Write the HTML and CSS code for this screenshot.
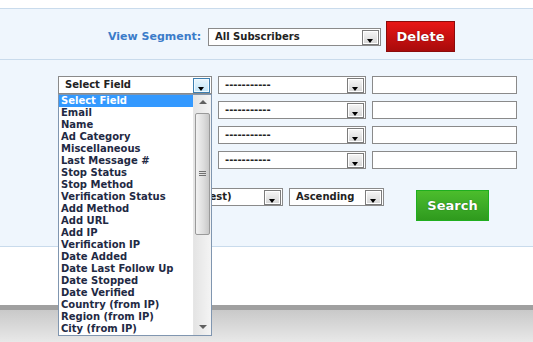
FILE: index.html
```html
<!DOCTYPE html>
<html lang="en">
<head>
  <meta charset="UTF-8" />
  <title>Subscribers</title>
  <link rel="stylesheet" href="styles.css">
</head>
<body>
  <div class="top-space"></div>

  <div class="segment-bar">
    <span class="segment-label">View Segment:</span>
    <div class="select segment-select"><span class="select-text">All Subscribers</span><span class="arrow"></span></div>
    <button class="btn btn-delete">Delete</button>
  </div>

  <div class="filter-panel">
    <div class="filter-rows">
      <div class="filter-row">
        <div class="select field-select"><span class="select-text">Select Field</span><span class="arrow arrow-hot"></span></div>
        <div class="select op-select"><span class="select-text">-----------</span><span class="arrow"></span></div>
        <input class="value-input" type="text">
      </div>
      <div class="filter-row">
        <div class="select field-select"><span class="arrow"></span></div>
        <div class="select op-select"><span class="select-text">-----------</span><span class="arrow"></span></div>
        <input class="value-input" type="text">
      </div>
      <div class="filter-row">
        <div class="select field-select"><span class="arrow"></span></div>
        <div class="select op-select"><span class="select-text">-----------</span><span class="arrow"></span></div>
        <input class="value-input" type="text">
      </div>
      <div class="filter-row">
        <div class="select field-select"><span class="arrow"></span></div>
        <div class="select op-select"><span class="select-text">-----------</span><span class="arrow"></span></div>
        <input class="value-input" type="text">
      </div>
    </div>

    <div class="sort-row">
      <span class="sort-label"></span>
      <div class="select sort-select"><span class="select-text sort-text">Date Added (Newest)</span><span class="arrow"></span></div>
      <div class="select dir-select"><span class="select-text">Ascending</span><span class="arrow"></span></div>
      <button class="btn btn-search">Search</button>
    </div>

    <!-- open dropdown of the first field select -->
    <div class="dropdown">
      <ul class="dropdown-list">
        <li class="selected">Select Field</li>
        <li>Email</li>
        <li>Name</li>
        <li>Ad Category</li>
        <li>Miscellaneous</li>
        <li>Last Message #</li>
        <li>Stop Status</li>
        <li>Stop Method</li>
        <li>Verification Status</li>
        <li>Add Method</li>
        <li>Add URL</li>
        <li>Add IP</li>
        <li>Verification IP</li>
        <li>Date Added</li>
        <li>Date Last Follow Up</li>
        <li>Date Stopped</li>
        <li>Date Verified</li>
        <li>Country (from IP)</li>
        <li>Region (from IP)</li>
        <li>City (from IP)</li>
      </ul>
      <div class="scrollbar">
        <span class="scroll-up"></span>
        <div class="scroll-thumb"><span class="grip"></span></div>
        <span class="scroll-down"></span>
      </div>
    </div>
  </div>

  <div class="white-space"></div>
  <div class="footer-band"></div>
</body>
</html>
```

FILE: styles.css
```css
html, body {
  margin: 0;
  padding: 0;
  height: 100%;
  overflow: hidden;
  background: #fff;
  font-family: 'DejaVu Sans', Verdana, sans-serif;
  font-weight: bold;
  color: #222;
}

.top-space {
  height: 8px;
}

.segment-bar {
  display: flex;
  align-items: flex-start;
  height: 50px;
  padding-left: 108px;
  background: #eff6fd;
  border-top: 1px solid #c9dbec;
  border-bottom: 1px solid #c9dbec;
  box-sizing: content-box;
}

.segment-label {
  margin-top: 21px;
  width: 100px;
  font-size: 11px;
  color: #3b7cc9;
}

/* fake select boxes */
.select {
  display: flex;
  align-items: flex-start;
  justify-content: space-between;
  height: 18px;
  box-sizing: border-box;
  border: 1px solid #8a8a8a;
  background: #fff;
}

.select-text {
  font-size: 10px;
  line-height: 16px;
  padding-left: 6px;
  white-space: nowrap;
  overflow: hidden;
}

.arrow {
  position: relative;
  flex: none;
  width: 17px;
  height: 15px;
  margin: 1px 1px 0 auto;
  box-sizing: border-box;
  border: 1px solid #7c7c7c;
  background: linear-gradient(#f6f6f6, #d6d6d6);
  box-shadow: inset 0 0 0 1px #fff;
}

.arrow::after {
  content: "";
  position: absolute;
  left: 4px;
  top: 8px;
  border-left: 3.5px solid transparent;
  border-right: 3.5px solid transparent;
  border-top: 4px solid #000;
}

.arrow-hot {
  border-color: #3c7fb1;
  background: linear-gradient(#eaf6fd, #bfe4f8);
  box-shadow: inset 0 0 0 1px #f2faff;
}

.segment-select {
  width: 173px;
  margin-top: 19px;
}

.btn {
  border: 1px solid;
  color: #fff;
  font-family: 'DejaVu Sans', Verdana, sans-serif;
  font-weight: bold;
  font-size: 13px;
  padding: 0;
  cursor: pointer;
}

.btn-delete {
  width: 69px;
  height: 31px;
  margin-top: 12px;
  margin-left: 5px;
  background: linear-gradient(#e81616, #a80b0b);
  border-color: #8c0b0b;
  text-shadow: 0 0 1px #600;
}

.filter-panel {
  position: relative;
  height: 170px;
  padding: 16px 0 0 58px;
  background: #eff6fd;
  border-bottom: 1px solid #c9dbec;
}

.filter-rows {
  display: flex;
  flex-direction: column;
  gap: 7px;
}

.filter-row {
  display: flex;
  gap: 6px;
}

.field-select {
  width: 154px;
}

.op-select {
  width: 148px;
}

.value-input {
  width: 145px;
  height: 18px;
  margin: 0;
  box-sizing: border-box;
  border: 1px solid #8a8a8a;
  background: #fff;
}

.sort-row {
  display: flex;
  align-items: flex-start;
  margin-top: 19px;
}

.sort-label {
  width: 47px;
}

.sort-select {
  width: 178px;
}

.sort-text {
  padding-left: 154px;
  text-indent: -149px;
}

.dir-select {
  width: 95px;
  margin-left: 6px;
}

.btn-search {
  width: 73px;
  height: 31px;
  margin: 2px 0 0 32px;
  background: linear-gradient(#4cbd2c, #3aa826 60%, #2f9a1d);
  border-color: #1fae1f;
  text-shadow: 0 0 1px #164d10;
}

/* the open list of the first field select */
.dropdown {
  position: absolute;
  left: 58px;
  top: 34px;
  width: 154px;
  height: 242px;
  display: flex;
  box-sizing: border-box;
  border: 1px solid #8096b0;
  background: #fff;
  z-index: 5;
}

.dropdown-list {
  flex: 1;
  list-style: none;
  margin: 0;
  padding: 0;
  font-size: 10px;
  line-height: 12px;
  color: #1f2a44;
}

.dropdown-list li {
  padding-left: 2px;
  white-space: nowrap;
}

.dropdown-list li.selected {
  background: #3399ff;
  color: #fff;
}

.scrollbar {
  position: relative;
  flex: none;
  width: 17px;
  background: linear-gradient(90deg, #e4e4e4, #f4f4f4);
  border-left: 1px solid #e6e6e6;
}

.scroll-up, .scroll-down {
  position: absolute;
  left: 5px;
  border-left: 4px solid transparent;
  border-right: 4px solid transparent;
}

.scroll-up {
  top: 5px;
  border-bottom: 4px solid #606060;
}

.scroll-down {
  bottom: 6px;
  border-top: 4px solid #606060;
}

.scroll-thumb {
  position: absolute;
  left: 1px;
  top: 18px;
  width: 13px;
  height: 120px;
  border: 1px solid #9a9a9a;
  border-radius: 2px;
  background: linear-gradient(90deg, #f2f2f2, #dcdcdc 60%, #c8c8c8);
}

.grip {
  position: absolute;
  left: 3px;
  top: 57px;
  width: 7px;
  height: 5px;
  background: repeating-linear-gradient(#707070 0 1px, transparent 1px 2px);
}

.white-space {
  height: 58px;
}

.footer-band {
  height: 40px;
  border-top: 5px solid #a0a0a0;
  background: linear-gradient(#c9c9c9, #f0f0f0);
}
```
